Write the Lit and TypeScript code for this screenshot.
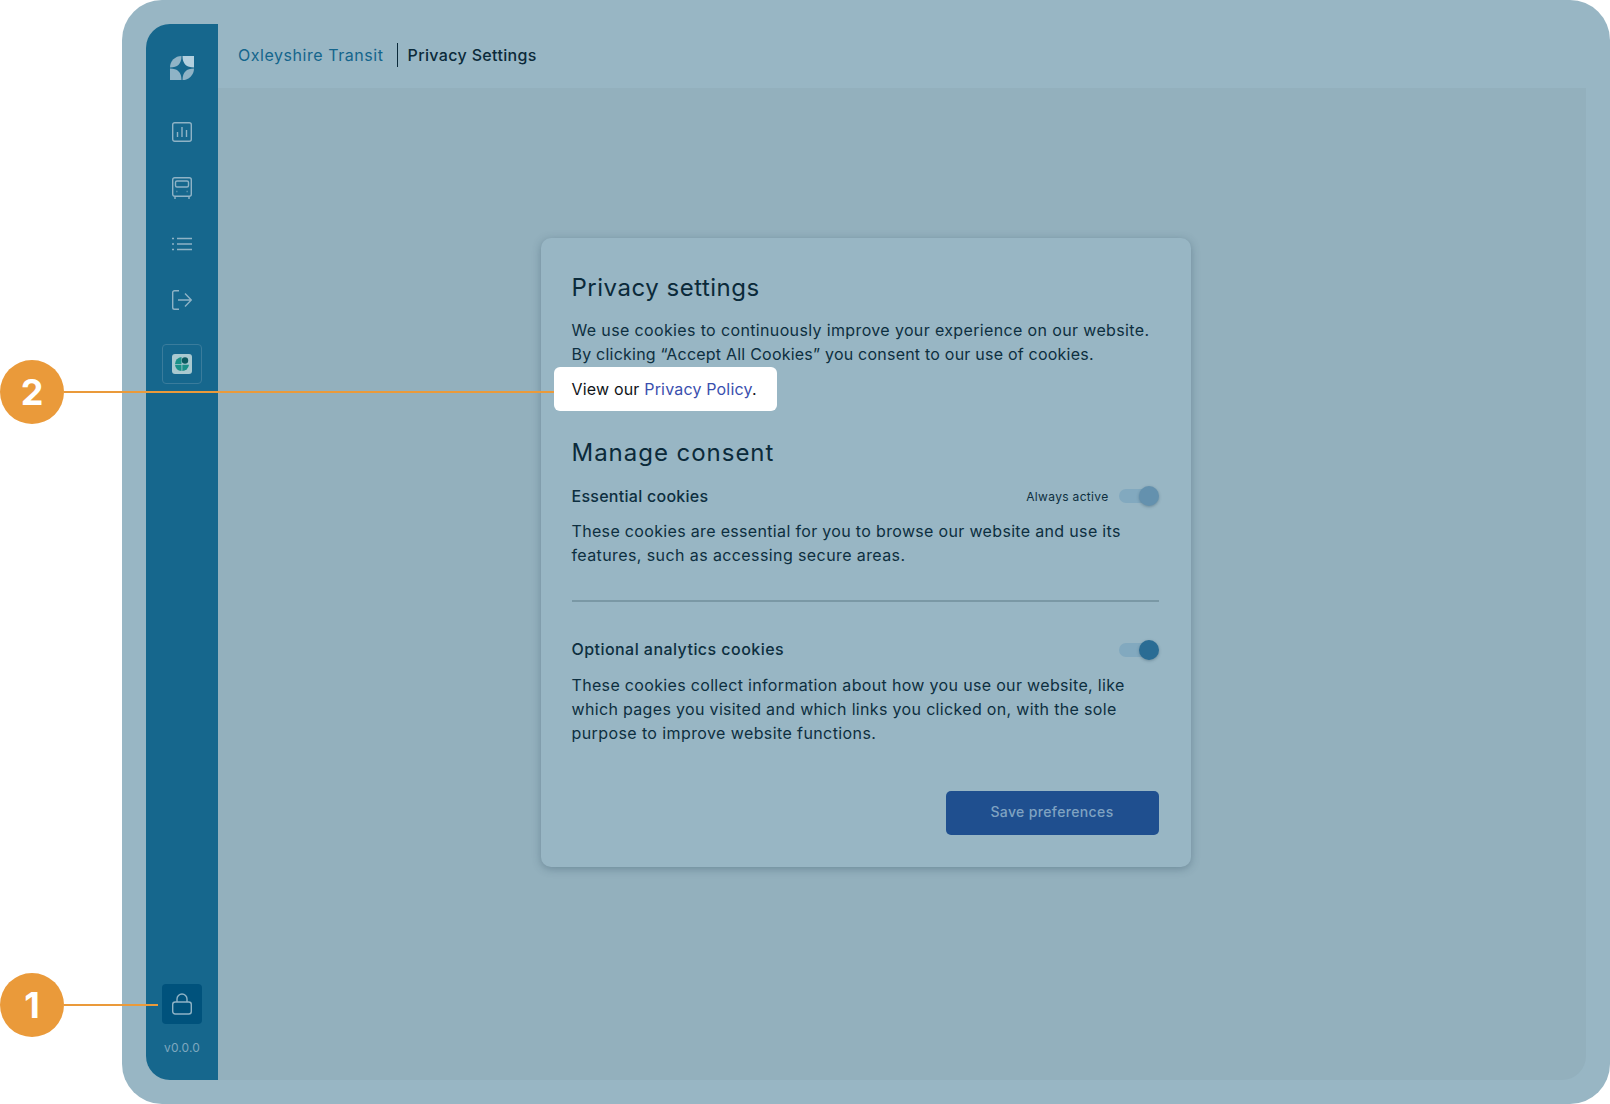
import { LitElement, html, css } from "lit";
import { customElement } from "lit/decorators.js";

@customElement("app-root")
export class AppRoot extends LitElement {
  static styles = css`
    :host { display: block; position: relative; width: 1610px; height: 1104px; overflow: hidden; background: #fff; font-family: Inter, "Open Sans", sans-serif; color: #0b2a3a; }
    .frame { box-sizing: border-box; margin-left: 122px; width: 1488px; height: 1104px; padding: 24px; background: #98b6c4; border-radius: 40px; display: flex; }
    .side { width: 72px; background: #16678d; border-radius: 24px 0 0 24px; display: flex; flex-direction: column; align-items: center; box-sizing: border-box; padding-top: 32px; flex: none; }
    .side svg { display: block; color: #8fb3c6; }
    .logo { margin-bottom: 42px; }
    .nav { display: flex; flex-direction: column; align-items: center; height: 56px; }
    .bus { height: 55px; margin-top: -1px; }
    .list { padding-top: 5px; height: 53px; }
    .exit { height: 58px; }
    .app { box-sizing: border-box; width: 40px; height: 40px; border: 1px solid #3a7c9c; border-radius: 4px; display: flex; align-items: center; justify-content: center; margin-top: -4px; }
    .spacer { flex: 1; }
    .lock { width: 40px; height: 40px; border-radius: 4px; background: #00527c; display: flex; align-items: center; justify-content: center; }
    .ver { font-size: 12px; line-height: 16px; color: #7ea8bf; margin: 16px 0 24px; letter-spacing: .1px; }
    .content { flex: 1; display: flex; flex-direction: column; min-width: 0; }
    .head { height: 64px; box-sizing: border-box; padding: 0 0 2px 20px; display: flex; align-items: center; font-size: 16px; letter-spacing: .55px; flex: none; }
    .crumb { color: #14658c; padding-right: 13px; border-right: 1px solid #0b2a3a; line-height: 24px; }
    .cur { padding-left: 10px; color: #0b2a3a; font-weight: 500; letter-spacing: .35px; }
    .main { flex: 1; background: #93b0bd; border-radius: 0 0 24px 0; display: flex; justify-content: center; box-sizing: border-box; padding-top: 150px; padding-right: 73px; }
    .card { box-sizing: border-box; width: 650px; height: 629px; background: #98b6c4; border-radius: 10px; box-shadow: 0 2px 8px rgba(40,70,90,.35); padding: 32px 32px 32px 31px; display: flex; flex-direction: column; }
    h2 { margin: 0; font-weight: 400; font-size: 24px; line-height: 36px; letter-spacing: .51px; color: #0b2a3a; }
    p { margin: 0; font-size: 16px; line-height: 24px; letter-spacing: .33px; color: #0d2f40; }
    .intro { margin-top: 12px; }
    .l1 { letter-spacing: .36px; }
    .l2 { letter-spacing: .22px; }
    .l3 { letter-spacing: .4px; }
    .view { position: relative; align-self: flex-start; margin: 1px 0 0 -18px; padding: 10px 20px 10px 18px; background: #fff; border-radius: 6px; color: #101418; letter-spacing: .18px; }
    .view a { color: #3a4fae; text-decoration: none; }
    .manage { margin-top: 24px; letter-spacing: .97px; }
    .row { display: flex; align-items: center; justify-content: space-between; height: 24px; }
    .first { margin-top: 13px; }
    .row b { font-weight: 500; font-size: 16px; letter-spacing: .27px; color: #0d2f40; }
    .row b.wide { letter-spacing: .45px; }
    .r { display: flex; align-items: center; gap: 10px; }
    .r span { font-size: 12px; letter-spacing: .33px; color: #0d2f40; }
    .tog { position: relative; width: 40px; height: 20px; }
    .tog.low { top: 1px; }
    .tog i { position: absolute; left: 0; right: 2px; top: 3px; bottom: 3px; background: #82a9bf; border-radius: 7px; }
    .tog u { position: absolute; right: 0; top: 0; width: 20px; height: 20px; border-radius: 50%; background: #2a6c94; box-shadow: 0 1px 3px rgba(30,60,80,.35); }
    .tog.off u { background: #6491ae; }
    .rule { height: 2px; background: #7a98a5; margin: 33px 0 35px; }
    .desc { margin-top: 11px; }
    .desc.lower { margin-top: 12px; }
    .actions { margin-top: auto; display: flex; justify-content: flex-end; }
    button { width: 213px; height: 44px; border: 0; border-radius: 5px; padding: 0 0 4px; background: #1f4f8f; color: #7fa3c2; font: 500 14px Inter, sans-serif; letter-spacing: .36px; }
    .callout { position: absolute; left: 0; width: 64px; height: 64px; border-radius: 50%; background: #ea9a3a; color: #fff; font: 700 36px/64px Inter, sans-serif; text-align: center; }
    .line { position: absolute; left: 64px; height: 2px; background: #ea9a3a; }
  `;

  render() {
    return html`
      <div class="frame">
        <aside class="side">
          <svg class="logo" width="24" height="24" viewBox="0 0 24 24" fill="currentColor">
            <path d="M11.5 0A11.5 11.5 0 0 0 0 11.5Q11.5 11.5 11.5 0Z" />
            <path d="M12.5 0H24V11.5Q12.5 11.5 12.5 0Z" fill="#b3d0df" />
            <path d="M0 12.5Q11.5 12.5 11.5 24H0Z" />
            <path d="M12.5 24Q12.5 12.5 24 12.5A11.5 11.5 0 0 1 12.5 24Z" />
          </svg>
          <div class="nav">
            <svg width="20" height="20" viewBox="0 0 20 20" fill="none" stroke="currentColor" stroke-width="1.4">
              <rect x=".7" y=".7" width="18.6" height="18.6" rx="2" />
              <path d="M5.5 15V10M10 15V5M14.5 15V8" />
            </svg>
          </div>
          <div class="nav bus">
            <svg width="20" height="22" viewBox="0 0 20 22" fill="none" stroke="currentColor" stroke-width="1.4">
              <rect x=".7" y=".7" width="18.6" height="18.6" rx="2" />
              <rect x="3.5" y="4" width="13" height="6" rx="1.5" />
              <path d="M3 20v2M17 20v2" />
              <path d="M4.5 14.5h.8M14.7 14.5h.8" stroke-width="1.6" />
            </svg>
          </div>
          <div class="nav list">
            <svg width="20" height="14" viewBox="0 0 20 14" fill="none" stroke="currentColor" stroke-width="1.6">
              <path d="M5 1.5H20M5 7H20M5 12.5H20" />
              <path d="M0 1.5H2M0 7H2M0 12.5H2" />
            </svg>
          </div>
          <div class="nav exit">
            <svg width="20" height="20" viewBox="0 0 20 20" fill="none" stroke="currentColor" stroke-width="1.4">
              <path d="M7 .7H2.5A1.8 1.8 0 0 0 .7 2.5V17.5A1.8 1.8 0 0 0 2.5 19.3H7" />
              <path d="M6 10H19M13 3.5L19.3 10L13 16.5" />
            </svg>
          </div>
          <div class="app">
            <svg width="20" height="20" viewBox="0 0 20 20">
              <rect width="20" height="20" rx="3" fill="#a9c9d0" />
              <path d="M3 10A7 7 0 0 1 9.5 3V10Z" fill="#1a9088" />
              <path d="M3 10.8H9.5V17A7 7 0 0 1 3 10.8Z" fill="#1a9088" />
              <path d="M10.3 10.8H17A7 7 0 0 1 10.3 17Z" fill="#1a9088" />
              <circle cx="13" cy="6.5" r="3.2" fill="#0b5a60" />
            </svg>
          </div>
          <div class="spacer"></div>
          <div class="lock">
            <svg width="20" height="22" viewBox="0 0 20 22" fill="none" stroke="currentColor" stroke-width="1.4">
              <rect x=".7" y="9" width="18.6" height="12" rx="2.5" />
              <path d="M5 9V6A5 5 0 0 1 15 6V9" />
            </svg>
          </div>
          <div class="ver">v0.0.0</div>
        </aside>
        <div class="content">
          <header class="head"><span class="crumb">Oxleyshire Transit</span><span class="cur">Privacy Settings</span></header>
          <main class="main">
            <section class="card">
              <h2>Privacy settings</h2>
              <p class="intro"><span class="l1">We use cookies to continuously improve your experience on our website.</span><br /><span class="l2">By clicking “Accept All Cookies” you consent to our use of cookies.</span></p>
              <p class="view">View our <a>Privacy Policy</a>.</p>
              <h2 class="manage">Manage consent</h2>
              <div class="row first">
                <b>Essential cookies</b>
                <div class="r"><span>Always active</span><div class="tog off"><i></i><u></u></div></div>
              </div>
              <p class="desc">These cookies are essential for you to browse our website and use its<br /><span class="l3">features, such as accessing secure areas.</span></p>
              <div class="rule"></div>
              <div class="row">
                <b class="wide">Optional analytics cookies</b>
                <div class="tog low"><i></i><u></u></div>
              </div>
              <p class="desc lower">These cookies collect information about how you use our website, like<br />which pages you visited and which links you clicked on, with the sole<br /><span class="l3">purpose to improve website functions.</span></p>
              <div class="actions"><button>Save preferences</button></div>
            </section>
          </main>
        </div>
      </div>
      <div class="callout" style="top:360px">2</div>
      <div class="line" style="top:391px;width:490px"></div>
      <div class="callout" style="top:973px">1</div>
      <div class="line" style="top:1004px;width:94px"></div>
    `;
  }
}
